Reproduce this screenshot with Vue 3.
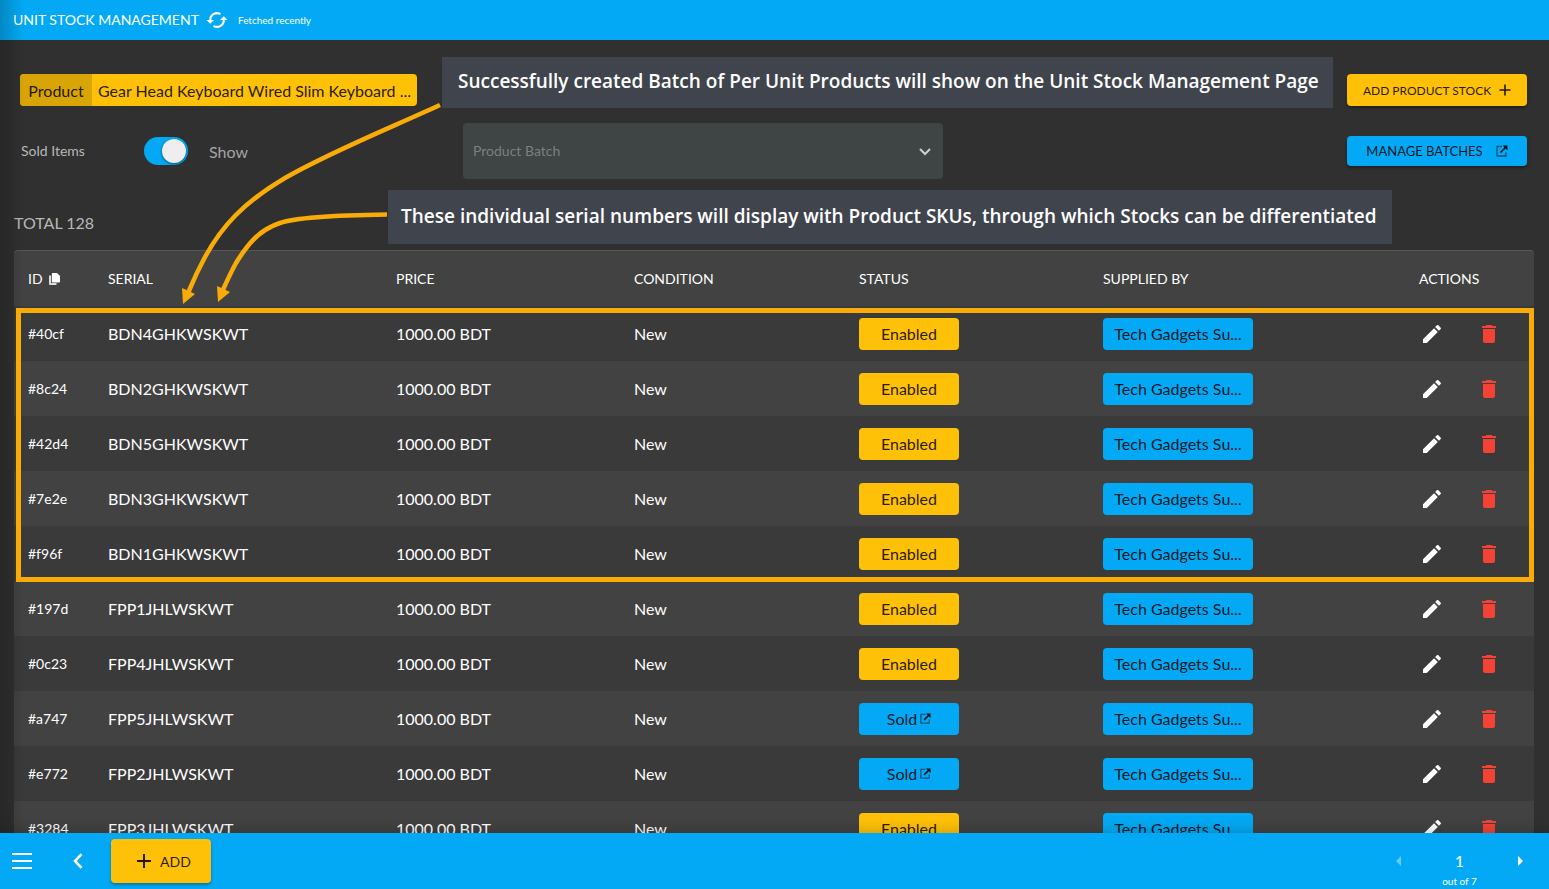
<script setup>
import { ref } from 'vue'

const soldShown = ref(true)
const batch = ref('')

const rows = [
  { id: '#40cf', serial: 'BDN4GHKWSKWT', sold: false },
  { id: '#8c24', serial: 'BDN2GHKWSKWT', sold: false },
  { id: '#42d4', serial: 'BDN5GHKWSKWT', sold: false },
  { id: '#7e2e', serial: 'BDN3GHKWSKWT', sold: false },
  { id: '#f96f', serial: 'BDN1GHKWSKWT', sold: false },
  { id: '#197d', serial: 'FPP1JHLWSKWT', sold: false },
  { id: '#0c23', serial: 'FPP4JHLWSKWT', sold: false },
  { id: '#a747', serial: 'FPP5JHLWSKWT', sold: true },
  { id: '#e772', serial: 'FPP2JHLWSKWT', sold: true },
  { id: '#3284', serial: 'FPP3JHLWSKWT', sold: false },
]
</script>

<template>
  <div class="app">
    <header class="topbar">
      <h1>UNIT STOCK MANAGEMENT</h1>
      <button class="plain refresh" type="button" aria-label="Refresh">
        <svg width="22" height="18" viewBox="0 0 22 18" fill="none" stroke="#fff" stroke-width="2">
          <path d="M4.2 9.5A6.8 6.8 0 0 1 14.500 3.200" />
          <path d="M17.800 8.500A6.800 6.800 0 0 1 7.500 14.800" />
          <path d="M0.500 9H8L4.200 12.800Z" fill="#fff" stroke="none" />
          <path d="M14 9h7.500L17.800 5.200Z" fill="#fff" stroke="none" />
        </svg>
      </button>
      <span class="fetched">Fetched recently</span>
    </header>

    <main>
      <section class="filters">
        <div class="left">
          <button class="product" type="button">
            <span class="product-tag">Product</span>
            <span class="product-name">Gear Head Keyboard Wired Slim Keyboard ...</span>
          </button>
          <label class="sold">
            <span class="sold-label">Sold Items</span>
            <input v-model="soldShown" class="switch" type="checkbox" />
            <span class="sold-state">Show</span>
          </label>
        </div>
        <div class="batch">
          <select v-model="batch" aria-label="Product Batch">
            <option value="">Product Batch</option>
          </select>
          <svg class="caret" width="12" height="8" viewBox="0 0 12 8" fill="none" stroke="#ccc" stroke-width="2.200">
            <path d="M1 1L6 6L11 1" />
          </svg>
        </div>
        <div class="right">
          <button class="action amber" type="button">
            ADD PRODUCT STOCK
            <svg width="12" height="12" viewBox="0 0 12 12" stroke="currentColor" stroke-width="1.600"><path d="M6 0.500V11.500M0.500 6H11.500" /></svg>
          </button>
          <button class="action blue" type="button">
            MANAGE BATCHES
            <svg class="ext" width="12" height="12" viewBox="0 0 12 12" fill="none" stroke="currentColor">
              <path d="M6 1.500H1V11H10V7" stroke-width="1.300" opacity="0.600" />
              <path d="M4.500 7.500L10 2" stroke-width="1.700" />
              <path d="M6.500 0.500H11.500V5.500Z" fill="currentColor" stroke="none" />
            </svg>
          </button>
        </div>
      </section>

      <p class="total">TOTAL 128</p>

      <table>
        <colgroup>
          <col class="c-id" /><col class="c-serial" /><col class="c-price" /><col class="c-cond" />
          <col class="c-status" /><col class="c-sup" /><col class="c-act" />
        </colgroup>
        <thead>
          <tr>
            <th>
              ID
              <svg class="copy" width="11" height="12" viewBox="0 0 11 12">
                <path d="M0 2.500H2V10H7.500V12H1Q0 12 0 11Z" fill="#ddd" />
                <path d="M3.800 0H8L11 3V8.500Q11 9.400 10 9.400H3.800Q2.800 9.400 2.800 8.500V1Q2.800 0 3.800 0Z" fill="#fff" />
              </svg>
            </th>
            <th>SERIAL</th>
            <th>PRICE</th>
            <th>CONDITION</th>
            <th>STATUS</th>
            <th>SUPPLIED BY</th>
            <th>ACTIONS</th>
          </tr>
        </thead>
        <tbody>
          <tr v-for="r in rows" :key="r.id">
            <td class="id">{{ r.id }}</td>
            <td>{{ r.serial }}</td>
            <td>1000.00 BDT</td>
            <td>New</td>
            <td>
              <button v-if="r.sold" class="chip status blue" type="button">
                Sold
                <svg class="ext" width="11" height="11" viewBox="0 0 12 12" fill="none" stroke="currentColor">
                  <path d="M6 1.500H1V11H10V7" stroke-width="1.300" opacity="0.600" />
                  <path d="M4.500 7.500L10 2" stroke-width="1.700" />
                  <path d="M6.500 0.500H11.500V5.500Z" fill="currentColor" stroke="none" />
                </svg>
              </button>
              <button v-else class="chip status amber" type="button">Enabled</button>
            </td>
            <td><button class="chip supplier blue" type="button">Tech Gadgets Su...</button></td>
            <td>
              <div class="acts">
                <button class="plain" type="button" aria-label="Edit">
                  <svg width="24" height="24" viewBox="0 0 24 24" fill="#fff">
                    <path d="M3 17.250V21h3.750L17.810 9.940l-3.750-3.750L3 17.250zM20.710 7.040c.39-.39.39-1.020 0-1.410l-2.340-2.340c-.39-.39-1.020-.39-1.410 0l-1.830 1.830 3.750 3.750 1.830-1.830z" />
                  </svg>
                </button>
                <button class="plain" type="button" aria-label="Delete">
                  <svg width="24" height="24" viewBox="0 0 24 24" fill="#f44336">
                    <path d="M6 19c0 1.100.9 2 2 2h8c1.100 0 2-.9 2-2V7H6v12zM19 4h-3.500l-1-1h-5l-1 1H5v2h14V4z" />
                  </svg>
                </button>
              </div>
            </td>
          </tr>
        </tbody>
      </table>
    </main>

    <footer>
      <button class="plain menu" type="button" aria-label="Menu">
        <svg width="20" height="16" viewBox="0 0 20 16" stroke="#fff" stroke-width="2"><path d="M0 1H20M0 8H20M0 15H20" /></svg>
      </button>
      <button class="plain back" type="button" aria-label="Back">
        <svg width="10" height="16" viewBox="0 0 10 16" fill="none" stroke="#fff" stroke-width="2.600"><path d="M8.500 1.200L2 8L8.500 14.800" /></svg>
      </button>
      <button class="add amber" type="button">
        <svg width="14" height="14" viewBox="0 0 14 14" stroke="currentColor" stroke-width="2"><path d="M7 0V14M0 7H14" /></svg>
        ADD
      </button>
      <nav class="pager" aria-label="Pages">
        <button class="plain" type="button" aria-label="Previous page" disabled>
          <svg width="5" height="10" viewBox="0 0 5 10" fill="#fff" opacity="0.400"><path d="M5 0V10L0 5Z" /></svg>
        </button>
        <p class="page"><span class="num">1</span><span class="of">out of 7</span></p>
        <button class="plain" type="button" aria-label="Next page">
          <svg width="5" height="10" viewBox="0 0 5 10" fill="#fff"><path d="M0 0V10L5 5Z" /></svg>
        </button>
      </nav>
    </footer>

    <div class="edge"></div>
    <div class="highlight"></div>
    <svg class="arrows" width="460" height="320" viewBox="0 0 460 320" fill="none" stroke="#f9ab08" stroke-width="4.600">
      <path d="M440 105C390 128 330 152 285 178C243 203 222 226 205 257C198 270 193 281 188 293" />
      <path d="M182 288L195 294L183 304Z" fill="#f9ab08" stroke="none" />
      <path d="M387 214.500C350 215 300 216 280 223C255 231 243 252 236 263C230 274 226 283 222 292" />
      <path d="M217 286L230 292L218 302Z" fill="#f9ab08" stroke="none" />
    </svg>
    <p class="note note-batch">Successfully created Batch of Per Unit Products will show on the Unit Stock Management Page</p>
    <p class="note note-serial">These individual serial numbers will display with Product SKUs, through which Stocks can be differentiated</p>
  </div>
</template>

<style>
body {
  margin: 0;
  background: #303030;
}
</style>

<style scoped>
.app {
  position: relative;
  display: flex;
  flex-direction: column;
  height: 100vh;
  overflow: hidden;
  background: #303030;
  color: #fff;
  font-family: Lato, "Open Sans", sans-serif;
  font-size: 16px;
}
* {
  box-sizing: border-box;
}
h1,
p {
  margin: 0;
  font-weight: 400;
}
svg {
  display: block;
  flex: none;
}
button,
select {
  font-family: inherit;
  border: 0;
  padding: 0;
  margin: 0;
}
.plain {
  background: none;
}
.topbar {
  flex: none;
  height: 40px;
  display: flex;
  align-items: center;
  padding: 0 13px;
  background: #03a9f4;
}
h1 {
  font-size: 14px;
  line-height: 16px;
}
.refresh {
  margin: 0 10px 0 7px;
}
.fetched {
  font-size: 10px;
}
.amber {
  background: #ffc107;
  color: rgba(0, 0, 0, 0.87);
}
.blue {
  background: #03a9f4;
  color: rgba(0, 0, 0, 0.87);
}
main {
  flex: 1;
  min-height: 0;
  overflow: hidden;
  padding: 34px 15px 0 14px;
}
.filters {
  display: grid;
  grid-template-columns: 397px 480px 1fr;
  column-gap: 46px;
  padding: 0 7px 0 6px;
  height: 105px;
}
.product {
  display: flex;
  width: 100%;
  height: 32px;
  border-radius: 4px;
  overflow: hidden;
  background: #ffc107;
  color: rgba(0, 0, 0, 0.87);
  font-size: 16px;
  line-height: 34px;
}
.product-tag {
  width: 72px;
  background: #d9a406;
}
.product-name {
  flex: 1;
  white-space: nowrap;
}
.sold {
  display: flex;
  align-items: center;
  height: 28px;
  margin-top: 31px;
  padding-left: 1px;
  color: #b8b8b8;
}
.sold-label {
  width: 123px;
  font-size: 14px;
  line-height: 16px;
}
.switch {
  appearance: none;
  display: flex;
  justify-content: flex-end;
  align-items: center;
  width: 44px;
  height: 28px;
  margin: 0 21px 0 0;
  padding: 0 2px;
  border-radius: 14px;
  background: #03a9f4;
}
.switch:not(:checked) {
  justify-content: flex-start;
  background: #666;
}
.switch::before {
  content: "";
  width: 24px;
  height: 24px;
  border-radius: 50%;
  background: #eee;
  box-shadow: 0 1px 3px rgba(0, 0, 0, 0.5);
}
.sold-state {
  line-height: 20px;
  padding-top: 2px;
  color: #a5a5a5;
}
.batch {
  position: relative;
  margin: 49px 0 0;
  height: 56px;
}
.batch select {
  appearance: none;
  width: 100%;
  height: 56px;
  padding: 0 10px 2px;
  border-radius: 4px;
  background: #3f4445;
  color: #7c7f80;
  font-size: 14px;
}
.caret {
  position: absolute;
  right: 12px;
  top: 25px;
}
.right {
  display: flex;
  flex-direction: column;
  justify-self: end;
  width: 180px;
  gap: 30px;
}
.action {
  display: flex;
  align-items: center;
  justify-content: center;
  border-radius: 4px;
  box-shadow: 0 2px 3px rgba(0, 0, 0, 0.35);
}
.action.amber {
  height: 32px;
  gap: 8px;
  font-size: 12px;
}
.action.blue {
  height: 30px;
  gap: 13px;
  font-size: 13px;
}
.total {
  margin-top: 34px;
  height: 37px;
  line-height: 20px;
  color: #b8b8b8;
}
table {
  width: 100%;
  table-layout: fixed;
  border-collapse: separate;
  border-spacing: 0;
  border-radius: 4px 4px 0 0;
  background: #424242;
  box-shadow: inset 0 1px #575757;
}
.c-id { width: 94px; }
.c-serial { width: 288px; }
.c-price { width: 238px; }
.c-cond { width: 225px; }
.c-status { width: 244px; }
.c-sup { width: 316px; }
.c-act { width: 115px; }
th,
td {
  padding: 0;
  height: 55px;
  text-align: left;
  vertical-align: middle;
  font-weight: 400;
  white-space: nowrap;
}
th {
  height: 56px;
  font-size: 14px;
}
th:first-child,
td:first-child {
  padding-left: 14px;
}
tbody tr:nth-child(odd) {
  background: #3a3a3a;
}
.id {
  font-size: 14px;
}
.copy {
  display: inline-block;
  margin-left: 3px;
  vertical-align: -1px;
}
.chip {
  display: flex;
  align-items: center;
  justify-content: center;
  height: 32px;
  border-radius: 4px;
  font-size: 16px;
}
.status {
  width: 100px;
  gap: 3px;
}
.supplier {
  width: 150px;
}
.acts {
  display: flex;
  gap: 33px;
  padding-left: 1px;
}
footer {
  position: relative;
  flex: none;
  height: 56px;
  display: flex;
  align-items: center;
  padding: 0 26px 0 12px;
  background: #03a9f4;
  box-shadow: 0 -2px 14px rgba(0, 0, 0, 0.2);
}
.back {
  margin: 0 28px 0 41px;
}
.add {
  display: flex;
  align-items: center;
  justify-content: center;
  gap: 9px;
  width: 100px;
  height: 44px;
  padding-left: 6px;
  border-radius: 4px;
  font-size: 14px;
  box-shadow: 0 2px 3px rgba(0, 0, 0, 0.3);
}
.pager {
  display: flex;
  align-items: center;
  justify-content: space-between;
  width: 127px;
  margin-left: auto;
}
.page {
  display: flex;
  flex-direction: column;
  align-items: center;
  gap: 1px;
  padding-top: 19px;
}
.num {
  line-height: 20px;
}
.of {
  font-size: 10px;
  line-height: 18px;
}
.edge {
  position: absolute;
  left: 0;
  top: 0;
  width: 24px;
  height: calc(100% - 56px);
  background: linear-gradient(90deg, rgba(0, 0, 0, 0.2), transparent);
  pointer-events: none;
}
.highlight {
  position: absolute;
  left: 16px;
  right: 15px;
  top: 308px;
  height: 274px;
  border: 5px solid #f9ab08;
  pointer-events: none;
}
.arrows {
  position: absolute;
  left: 0;
  top: 0;
  pointer-events: none;
}
.note {
  position: absolute;
  background: #40444d;
  font-family: "Open Sans", "Noto Sans", sans-serif;
  font-weight: 600;
  font-size: 19px;
  white-space: nowrap;
}
.note-batch {
  left: 442px;
  top: 57px;
  width: 891px;
  height: 51px;
  padding-left: 16px;
  line-height: 48px;
}
.note-serial {
  left: 388px;
  top: 190px;
  width: 1004px;
  height: 54px;
  padding-left: 13px;
  line-height: 52px;
}
</style>
